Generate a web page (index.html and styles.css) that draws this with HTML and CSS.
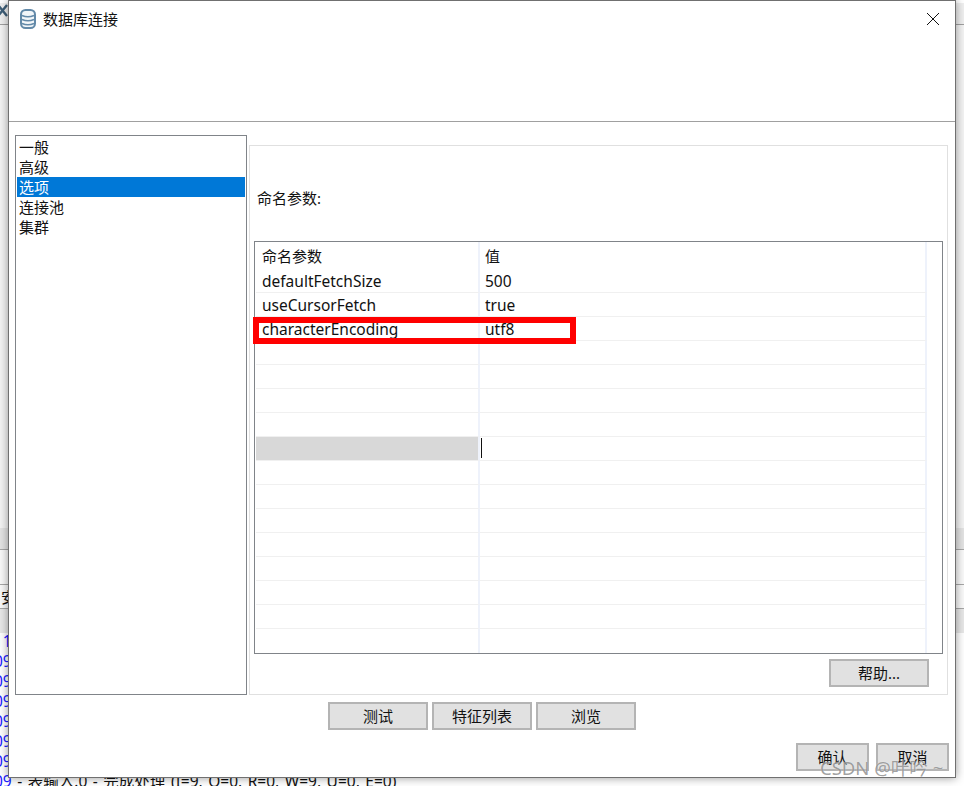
FILE: index.html
```html
<!DOCTYPE html>
<html lang="zh-CN">
<head>
  <meta charset="UTF-8">
  <title>数据库连接</title>
  <link rel="stylesheet" href="styles.css">
</head>
<body>
  <!-- Ventana de fondo -->
  <div class="fondo">
    <div class="fondo-top">
      <svg class="fondo-icono" width="10" height="16" viewBox="0 0 10 16"><path d="M-2 2l9 11M7 2l-9 11" fill="none" stroke="#3f5f78" stroke-width="2.4"/></svg>
    </div>
    <div class="fondo-hueco"></div>
    <div class="fondo-banda"></div>
    <div class="fondo-vacio"></div>
    <div class="fondo-tab">安</div>
    <div class="fondo-banda2"></div>
    <div class="log">
      <p><span class="azul">11</span></p>
      <p><span class="azul">09</span></p>
      <p><span class="azul">09</span></p>
      <p><span class="azul">09</span></p>
      <p><span class="azul">09</span></p>
      <p><span class="azul">09</span></p>
      <p><span class="azul">09</span></p>
      <p><span class="azul">09</span> - 表输入.0 - 完成处理 (I=9, O=0, R=0, W=9, U=0, E=0)</p>
    </div>
  </div>

  <!-- Diálogo -->
  <div class="dialogo">
    <div class="titulo">
      <svg class="titulo-icono" width="16" height="20" viewBox="0 0 16 20">
        <rect x="1" y="1" width="14" height="18" rx="4.5" fill="#f2f6f9" stroke="#6289a8" stroke-width="2"/>
        <path d="M2 6.5q6 2.6 12 0M2 10.5q6 2.6 12 0M2 14.5q6 2.6 12 0" fill="none" stroke="#6289a8" stroke-width="1.6"/>
      </svg>
      <span class="titulo-texto">数据库连接</span>
      <svg class="cerrar" width="14" height="14" viewBox="0 0 14 14"><path d="M1 1l12 12M13 1L1 13" fill="none" stroke="#111" stroke-width="1"/></svg>
    </div>

    <div class="cuerpo">
      <ul class="lista">
        <li>一般</li>
        <li>高级</li>
        <li class="activo">选项</li>
        <li>连接池</li>
        <li>集群</li>
      </ul>

      <div class="panel">
        <p class="panel-label">命名参数:</p>
        <div class="params">
          <table>
            <thead>
              <tr><th>命名参数</th><th>值</th><th></th></tr>
            </thead>
            <tbody>
              <tr><td>defaultFetchSize</td><td>500</td><td></td></tr>
              <tr><td>useCursorFetch</td><td>true</td><td></td></tr>
              <tr><td>characterEncoding</td><td>utf8</td><td></td></tr>
              <tr><td></td><td></td><td></td></tr>
              <tr><td></td><td></td><td></td></tr>
              <tr><td></td><td></td><td></td></tr>
              <tr><td></td><td></td><td></td></tr>
              <tr><td class="sel"></td><td><span class="caret"></span></td><td></td></tr>
              <tr><td></td><td></td><td></td></tr>
              <tr><td></td><td></td><td></td></tr>
              <tr><td></td><td></td><td></td></tr>
              <tr><td></td><td></td><td></td></tr>
              <tr><td></td><td></td><td></td></tr>
              <tr><td></td><td></td><td></td></tr>
              <tr><td></td><td></td><td></td></tr>
              <tr class="ultima"><td></td><td></td><td></td></tr>
            </tbody>
          </table>
          <div class="marca-roja"></div>
        </div>
        <div class="panel-ayuda">
          <button class="btn">帮助...</button>
        </div>
      </div>
    </div>

    <div class="acciones">
      <button class="btn">测试</button>
      <button class="btn">特征列表</button>
      <button class="btn">浏览</button>
    </div>

    <div class="pie">
      <button class="btn btn-pie">确认</button>
      <button class="btn btn-pie">取消</button>
    </div>
  </div>

  <div class="watermark">CSDN @叶吟 ~</div>
</body>
</html>
```

FILE: styles.css
```css
* {
  margin: 0;
  padding: 0;
  box-sizing: border-box;
  font-family: "Noto Sans", "Noto Sans CJK SC", sans-serif;
}

html, body {
  height: 786px;
  overflow: hidden;
}

body {
  position: relative;
  background: #fff;
  color: #111;
  font-size: 15px;
}

/* Ventana de fondo */
.fondo {
  height: 786px;
  overflow: hidden;
}
.fondo-top {
  height: 22px;
  background: #f0f0f0;
  border-bottom: 1px solid #a0a0a0;
}
.fondo-icono {
  display: block;
  margin-top: 3px;
}
.fondo-hueco {
  height: 503px;
  background: #f4f4f4;
}
.fondo-banda {
  height: 22px;
  background: #e4e4e4;
  border-bottom: 1px solid #a8a8a8;
}
.fondo-vacio {
  height: 35px;
  background: #fafafa;
  border-bottom: 1px solid #a8a8a8;
}
.fondo-tab {
  height: 24px;
  line-height: 25px;
  padding-left: 1px;
  background: #fafafa;
  border-bottom: 1px solid #a8a8a8;
}
.fondo-banda2 {
  height: 24px;
  background: #e8e8e8;
}
.log {
  margin-left: -6px;
  background: #fff;
  font-size: 15.5px;
  word-spacing: 1.5px;
}
.log p {
  height: 20px;
  line-height: 16px;
  white-space: nowrap;
}
.azul {
  color: #1a1aff;
}

/* Diálogo */
.dialogo {
  position: absolute;
  left: 8px;
  top: 0;
  width: 948px;
  height: 778px;
  background: #fff;
  border: 1px solid #707070;
  box-shadow: 0 0 9px rgba(0, 0, 0, 0.4);
}
.titulo {
  display: flex;
  align-items: flex-start;
  height: 121px;
  padding: 8px 15px 0 11px;
  border-bottom: 1px solid #a0a0a0;
}
.titulo-texto {
  margin-left: 7px;
  line-height: 20px;
}
.cerrar {
  margin-left: auto;
  margin-top: 3px;
}

.cuerpo {
  display: grid;
  grid-template-columns: 232px 699px;
  column-gap: 2px;
  padding: 13px 0 0 6px;
}

.lista {
  height: 560px;
  list-style: none;
  padding: 1px;
  border: 1px solid #808489;
}
.lista li {
  height: 20px;
  line-height: 20px;
  padding-left: 2px;
}
.lista .activo {
  background: #0078d7;
  color: #fff;
}

.panel {
  height: 550px;
  margin-top: 10px;
  padding: 0 4px 0 4px;
  border: 1px solid #e0e0e0;
}
.panel-label {
  height: 20px;
  line-height: 20px;
  margin: 42px 0 33px 3px;
}

.params {
  position: relative;
  height: 413px;
  padding-left: 1px;
  border: 1px solid #808489;
}
.params table {
  width: 687px;
  table-layout: fixed;
  border-collapse: separate;
  border-spacing: 0;
  font-size: 15.5px;
}
.params th:nth-child(1) { width: 224px; }
.params th:nth-child(2) { width: 447px; }
.params th {
  height: 27px;
  font-size: 15px;
  font-weight: normal;
  text-align: left;
}
.params td {
  height: 24px;
  border-bottom: 1px solid #f0f0f0;
}
.params th, .params td {
  padding-left: 5px;
  line-height: 22px;
  vertical-align: middle;
}
.params th:first-child, .params td:first-child {
  padding-left: 6px;
}
.params th:not(:last-child), .params td:not(:last-child) {
  border-right: 2px solid #eef2fb;
}
.params th:last-child, .params td:last-child {
  border-bottom: 0;
}
.params .ultima td {
  border-bottom: 0;
}
.params .sel {
  background: #d8d8d8;
}
.caret {
  display: block;
  width: 1px;
  height: 20px;
  margin: 0 0 2px -4px;
  background: #111;
}

/* Recuadro rojo sobre la fila */
.marca-roja {
  position: absolute;
  left: -2px;
  top: 75px;
  width: 323px;
  height: 27px;
  border: 6px solid #f00;
}

.panel-ayuda {
  display: flex;
  justify-content: flex-end;
  margin-top: 5px;
  padding-right: 14px;
}

.btn {
  width: 100px;
  height: 28px;
  background: #e1e1e1;
  border: 2px solid #b4b4b4;
  color: #111;
  font-size: 15px;
  line-height: 22px;
}

.acciones {
  display: flex;
  justify-content: center;
  gap: 4px;
  margin-top: 7px;
}

.pie {
  display: flex;
  justify-content: flex-end;
  gap: 7px;
  margin-top: 13px;
  padding-right: 6px;
}
.btn-pie {
  width: 73px;
}

.watermark {
  position: absolute;
  left: 820px;
  top: 757px;
  font-size: 18.5px;
  line-height: 22px;
  white-space: nowrap;
  color: rgba(120, 120, 120, 0.7);
  text-shadow: 0 0 1px rgba(255, 255, 255, 0.7);
}
```
